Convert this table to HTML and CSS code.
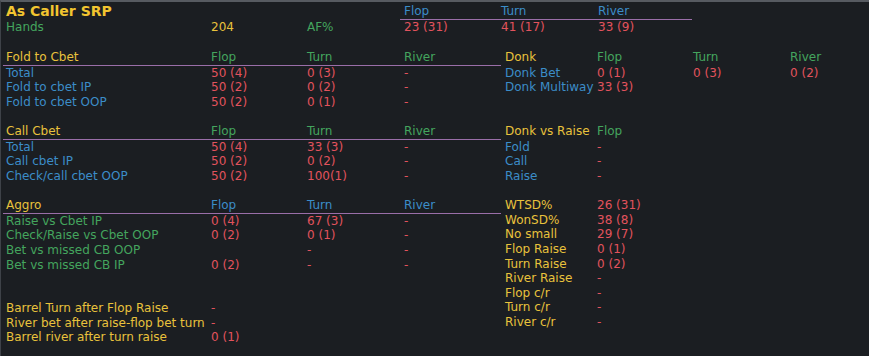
FILE: index.html
```html
<!DOCTYPE html>
<html>
<head>
<meta charset="utf-8">
<link rel="stylesheet" href="styles.css">
</head>
<body>
<div class="hud">
  <div class="top">
    <div class="title">As Caller SRP</div>
    <div class="th blue">Flop</div>
    <div class="th blue">Turn</div>
    <div class="th blue">River</div>
    <div class="lbl green">Hands</div>
    <div class="yellow">204</div>
    <div class="green">AF%</div>
    <div class="tv red">23 (31)</div>
    <div class="tv red">41 (17)</div>
    <div class="tv red">33 (9)</div>
  </div>
  <div class="body">
    <div class="left">
      <div class="tbl gap1">
        <div class="hd lbl yellow">Fold to Cbet</div><div class="hd green">Flop</div><div class="hd green">Turn</div><div class="hd green">River</div>
        <div class="lbl blue">Total</div><div class="red">50 (4)</div><div class="red">0 (3)</div><div class="red">-</div>
        <div class="lbl blue">Fold to cbet IP</div><div class="red">50 (2)</div><div class="red">0 (2)</div><div class="red">-</div>
        <div class="lbl blue">Fold to cbet OOP</div><div class="red">50 (2)</div><div class="red">0 (1)</div><div class="red">-</div>
      </div>
      <div class="tbl gap1">
        <div class="hd lbl yellow">Call Cbet</div><div class="hd green">Flop</div><div class="hd green">Turn</div><div class="hd green">River</div>
        <div class="lbl blue">Total</div><div class="red">50 (4)</div><div class="red">33 (3)</div><div class="red">-</div>
        <div class="lbl blue">Call cbet IP</div><div class="red">50 (2)</div><div class="red">0 (2)</div><div class="red">-</div>
        <div class="lbl blue">Check/call cbet OOP</div><div class="red">50 (2)</div><div class="red">100(1)</div><div class="red">-</div>
      </div>
      <div class="tbl gap2">
        <div class="hd lbl yellow">Aggro</div><div class="hd blue">Flop</div><div class="hd blue">Turn</div><div class="hd blue">River</div>
        <div class="lbl green">Raise vs Cbet IP</div><div class="red">0 (4)</div><div class="red">67 (3)</div><div class="red">-</div>
        <div class="lbl green">Check/Raise vs Cbet OOP</div><div class="red">0 (2)</div><div class="red">0 (1)</div><div class="red">-</div>
        <div class="lbl green">Bet vs missed CB OOP</div><div class="red"></div><div class="red">-</div><div class="red">-</div>
        <div class="lbl green">Bet vs missed CB IP</div><div class="red">0 (2)</div><div class="red">-</div><div class="red">-</div>
      </div>
      <div class="tbl">
        <div class="lbl yellow">Barrel Turn after Flop Raise</div><div class="red">-</div><div></div><div></div>
        <div class="lbl yellow">River bet after raise-flop bet turn</div><div class="red">-</div><div></div><div></div>
        <div class="lbl yellow">Barrel river after turn raise</div><div class="red">0 (1)</div><div></div><div></div>
      </div>
    </div>
    <div class="right">
      <div class="rtbl gap2">
        <div class="hd rl yellow">Donk</div><div class="hd green">Flop</div><div class="hd green">Turn</div><div class="hd green">River</div>
        <div class="rl blue">Donk Bet</div><div class="red">0 (1)</div><div class="red">0 (3)</div><div class="red">0 (2)</div>
        <div class="rl blue">Donk Multiway</div><div class="red">33 (3)</div><div></div><div></div>
      </div>
      <div class="rtbl gap1">
        <div class="hd rl yellow">Donk vs Raise</div><div class="hd green">Flop</div><div class="hd"></div><div class="hd"></div>
        <div class="rl blue">Fold</div><div class="red">-</div><div></div><div></div>
        <div class="rl blue">Call</div><div class="red">-</div><div></div><div></div>
        <div class="rl blue">Raise</div><div class="red">-</div><div></div><div></div>
      </div>
      <div class="rtbl">
        <div class="rl yellow">WTSD%</div><div class="red">26 (31)</div><div></div><div></div>
        <div class="rl yellow">WonSD%</div><div class="red">38 (8)</div><div></div><div></div>
        <div class="rl yellow">No small</div><div class="red">29 (7)</div><div></div><div></div>
        <div class="rl yellow">Flop Raise</div><div class="red">0 (1)</div><div></div><div></div>
        <div class="rl yellow">Turn Raise</div><div class="red">0 (2)</div><div></div><div></div>
        <div class="rl yellow">River Raise</div><div class="red">-</div><div></div><div></div>
        <div class="rl yellow">Flop c/r</div><div class="red">-</div><div></div><div></div>
        <div class="rl yellow">Turn c/r</div><div class="red">-</div><div></div><div></div>
        <div class="rl yellow">River c/r</div><div class="red">-</div><div></div><div></div>
      </div>
    </div>
  </div>
</div>
</body>
</html>
```
FILE: styles.css
```css
html, body {
  margin: 0;
  padding: 0;
  background: #1b1e22;
}
.hud {
  width: 869px;
  height: 356px;
  box-sizing: border-box;
  border-top: 2px solid #575b61;
  border-left: 1px solid #3e4248;
  padding-top: 1px;
  padding-left: 2px;
  background: #1b1e22;
  font-family: "DejaVu Sans", Verdana, sans-serif;
  font-size: 12px;
  line-height: 14.6px;
  white-space: nowrap;
  overflow: hidden;
}
.top {
  display: grid;
  grid-template-columns: 208px 96px 93px 97px 97px 98px;
  margin-bottom: 15.6px;
}
.title {
  grid-column: 1 / span 3;
  padding-left: 3px;
  font-weight: bold;
  font-size: 14px;
  line-height: 16px;
  color: #f2c530;
}
.th {
  line-height: 16px;
  padding-left: 4px;
  border-bottom: 1px solid #9a6ea8;
}
.tv {
  padding-left: 4px;
}
.body {
  display: flex;
}
.left {
  width: 498px;
}
.right {
  flex: 1;
}
.tbl {
  display: grid;
  grid-template-columns: 208px 96px 97px 97px;
}
.rtbl {
  display: grid;
  grid-template-columns: 96px 96px 97px 1fr;
}
.hd {
  border-bottom: 1px solid #9a6ea8;
}
.rtbl .hd {
  border-bottom-color: transparent;
}
.lbl {
  padding-left: 3px;
}
.rl {
  padding-left: 4px;
}
.gap1 {
  margin-bottom: 14.6px;
}
.gap2 {
  margin-bottom: 29.2px;
}
.yellow { color: #e9c23c; }
.green { color: #44a55e; }
.blue { color: #3b8dc8; }
.red { color: #e2535d; }
```
